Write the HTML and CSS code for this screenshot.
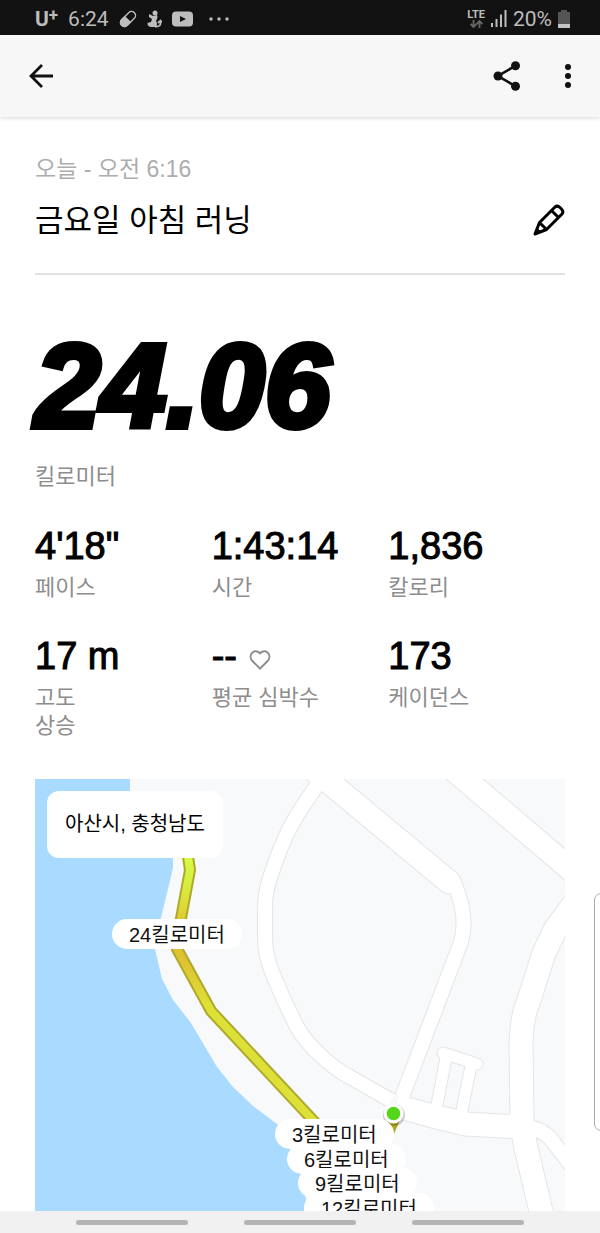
FILE: index.html
```html
<!DOCTYPE html>
<html lang="ko">
<head>
    <meta charset="UTF-8">
    <meta name="viewport" content="width=device-width, initial-scale=1">
    <title>금요일 아침 러닝</title>
    <link rel="stylesheet" href="styles.css">
</head>
<body>
    <div class="status-bar">
        <div class="status-left">
            <span class="carrier">U<sup>+</sup></span>
            <span>6:24</span>
            <svg class="pill-icon" width="18" height="18" viewBox="0 0 18 18">
                <g transform="rotate(-45 9 9)">
                    <rect x="0" y="5" width="18" height="8" rx="4" fill="none" stroke="#bdbdbd" stroke-width="1.4"/>
                    <path d="M9 4.3H4a4.7 4.7 0 0 0 0 9.4h5z" fill="#bdbdbd"/>
                </g>
            </svg>
            <svg width="15" height="18" viewBox="0 0 15 18" fill="#bdbdbd">
                <circle cx="8" cy="3" r="2.5"/>
                <path d="M2 4l4 2 4-1q1 2 0 4l-1 2q2 3 0 6H4q-4-1-3.500-4l3.500-1 1-3L2 7z"/>
                <path d="M8 16.500c4 .5 6-1 5.500-5M11 13l2.500-2.500 1.500 2" fill="none" stroke="#bdbdbd" stroke-width="1.800"/>
            </svg>
            <svg width="21" height="16" viewBox="0 0 21 16">
                <rect width="21" height="15" y=".5" rx="4" fill="#bdbdbd"/>
                <path d="M8 5l6 3-6 3z" fill="#121212"/>
            </svg>
            <svg class="more-icon" width="20" height="4" viewBox="0 0 20 4" fill="#bdbdbd">
                <circle cx="2" cy="2" r="1.700"/>
                <circle cx="10" cy="2" r="1.700"/>
                <circle cx="18" cy="2" r="1.700"/>
            </svg>
        </div>
        <div class="status-right">
            <div class="network">
                <span>LTE</span>
                <svg width="13" height="8" viewBox="0 0 13 8" fill="none" stroke="#666" stroke-width="1.800">
                    <path d="M3.500 0v7M.6 4l2.900 3 2.900-3M9.500 8V1M6.600 4l2.900-3 2.900 3"/>
                </svg>
            </div>
            <svg width="16" height="17" viewBox="0 0 16 17" fill="#bdbdbd">
                <path d="M0 13h2v4H0zM4.500 9h2v8h-2zM9 4.500h2V17H9zM13.500 0h2v17h-2z"/>
            </svg>
            <span>20%</span>
            <svg width="12" height="18" viewBox="0 0 12 18">
                <path d="M3 2V0h6v2h3v16H0V2z" fill="#555"/>
                <path d="M0 14h12v4H0z" fill="#c4c4c4"/>
            </svg>
        </div>
    </div>

    <header class="app-bar">
        <button class="icon-button" aria-label="뒤로">
            <svg width="24" height="24" viewBox="0 0 24 24" fill="none" stroke="#111" stroke-width="2.800">
                <path d="M24 12H2M13 1L2 12l11 11"/>
            </svg>
        </button>
        <div class="app-actions">
            <button class="icon-button" aria-label="공유">
                <svg width="28" height="30" viewBox="0 0 28 30">
                    <path d="M22 5L5 15l17 10" fill="none" stroke="#111" stroke-width="2.600"/>
                    <circle cx="22.500" cy="4.800" r="4.500" fill="#111"/>
                    <circle cx="5" cy="15" r="4.500" fill="#111"/>
                    <circle cx="22.500" cy="25.200" r="4.500" fill="#111"/>
                </svg>
            </button>
            <button class="icon-button" aria-label="더보기">
                <svg width="8" height="24" viewBox="0 0 8 24" fill="#111">
                    <circle cx="4" cy="3" r="3"/>
                    <circle cx="4" cy="12" r="3"/>
                    <circle cx="4" cy="21" r="3"/>
                </svg>
            </button>
        </div>
    </header>

    <main class="content">
        <div class="date">오늘 - 오전 6:16</div>
        <div class="title-row">
            <h1>금요일 아침 러닝</h1>
            <button class="icon-button" aria-label="제목 수정">
                <svg width="32" height="32" viewBox="0 0 32 32" fill="none" stroke="#000" stroke-width="3" stroke-linejoin="round">
                    <path d="M2 30l4.500-11.500L22 3q2.500-2 5 .5l1.500 1.500q2.500 2.500.500 5L13.500 25.500zM18.500 6.500l7 7M6.500 18.500l7 7"/>
                    <path d="M2 30l2-6 4 4z" fill="#000" stroke-width="1"/>
                </svg>
            </button>
        </div>

        <div class="distance">24.06</div>
        <div class="label">킬로미터</div>

        <div class="stats">
            <div class="stat">
                <div class="value">4'18"</div>
                <div class="label">페이스</div>
            </div>
            <div class="stat">
                <div class="value">1:43:14</div>
                <div class="label">시간</div>
            </div>
            <div class="stat">
                <div class="value">1,836</div>
                <div class="label">칼로리</div>
            </div>
            <div class="stat">
                <div class="value">17 m</div>
                <div class="label">고도<br>상승</div>
            </div>
            <div class="stat">
                <div class="value">--
                    <svg class="heart" width="22" height="20" viewBox="0 0 22 20" fill="none" stroke="#8d8d8d" stroke-width="2">
                        <path d="M11 18.600L3.200 10.800C-1.500 5.500 5-2.500 11 3.300 17-2.500 23.500 5.500 18.800 10.800z"/>
                    </svg>
                </div>
                <div class="label">평균 심박수</div>
            </div>
            <div class="stat">
                <div class="value">173</div>
                <div class="label">케이던스</div>
            </div>
        </div>

        <div class="map">
            <svg class="map-canvas" viewBox="35 779 530 432" preserveAspectRatio="xMinYMin slice">
                <defs>
                    <linearGradient id="pace" gradientUnits="userSpaceOnUse" x1="0" y1="860" x2="0" y2="1020">
                        <stop offset="0" stop-color="#d3fb45"/>
                        <stop offset=".22" stop-color="#dae63b"/>
                        <stop offset=".45" stop-color="#dfba30"/>
                        <stop offset=".65" stop-color="#dfc431"/>
                        <stop offset=".9" stop-color="#dde037"/>
                    </linearGradient>
                    <g id="roads" fill="none" stroke-linejoin="round">
                        <path class="road-m" d="M326 772L309 797Q293 820 285 838T270 878Q265 893 265 908V937Q265 955 272 972T284 1000L297 1027Q305 1041 320 1055T348 1076L392 1101"/>
                        <path class="road-l" d="M396 1106L433 1116 466 1124 520 1127"/>
                        <path class="road-m" d="M528 1127Q545 1130 554 1143L574 1169"/>
                        <path class="road-l" d="M577 900L555 930 544 953 529 1000Q522 1015 521 1043L522 1118Q523 1135 526 1148L546 1232"/>
                        <path class="road-l" stroke-linecap="round" d="M312 768L449 882"/>
                        <path class="road-l" d="M440 758L582 879"/>
                        <path class="road-m" d="M454 882L459 896Q467 922 461 942L439 1000 402 1097"/>
                        <path class="road-s" stroke-linecap="round" d="M443 1053L477 1064"/>
                        <path class="road-s" d="M446 1058L436 1110M471 1066L461 1115"/>
                    </g>
                </defs>
                <path fill="#a9daff" d="M35 779h95v40l43 39v10l-12 50-6 31 7 30 11 21 18 23 26 44 16 20 20 19 24 18 23 31 8 60v48H35z"/>
                <use href="#roads" class="road-edge"/>
                <use href="#roads" class="road-fill"/>
                <path class="route-edge" d="M187 850L190 870 177 940 177 949 211 1011 324 1132"/>
                <path class="route" d="M187 850L190 870 177 940 177 949 211 1011 324 1132"/>
                <path fill="#b3a91d" d="M387 1120h13l-6 14z"/>
                <circle cx="394" cy="1115" r="11" fill="#000" opacity=".2"/>
                <circle cx="393.500" cy="1113.500" r="10" fill="#fff"/>
                <circle cx="393.500" cy="1113.500" r="6.800" fill="#55d61b"/>
            </svg>
            <div class="place">아산시, 충청남도</div>
            <span class="marker km24">24킬로미터</span>
            <span class="marker km3">3킬로미터</span>
            <span class="marker km6">6킬로미터</span>
            <span class="marker km9">9킬로미터</span>
            <span class="marker km12">12킬로미터</span>
        </div>
    </main>

    <nav class="nav-bar">
        <button aria-label="최근 앱"></button>
        <button aria-label="홈"></button>
        <button aria-label="뒤로 가기"></button>
    </nav>
    <div class="edge-handle"></div>
</body>
</html>
```

FILE: styles.css
```css
* {
    box-sizing: border-box;
}
body {
    margin: 0;
    height: 100vh;
    display: flex;
    flex-direction: column;
    overflow: hidden;
    background-color: #fff;
    color: #000;
    font-family: "Liberation Sans", "Noto Sans CJK KR", sans-serif;
}
svg {
    display: block;
    flex: none;
}
button {
    border: none;
    padding: 0;
    background: none;
    cursor: pointer;
}

/* status bar */
.status-bar {
    flex: none;
    height: 35px;
    padding: 2px 30px 0 35px;
    display: flex;
    justify-content: space-between;
    align-items: center;
    background-color: #121212;
    color: #bdbdbd;
    font-family: Roboto, "Liberation Sans", sans-serif;
    font-size: 21px;
}
.status-left {
    display: flex;
    align-items: center;
    gap: 10px;
}
.carrier {
    font-weight: 700;
    line-height: 20px;
}
.carrier sup {
    font-size: 17px;
    line-height: 0;
    vertical-align: 5px;
}
.more-icon {
    margin-left: 6px;
}
.status-right {
    display: flex;
    align-items: center;
    gap: 6px;
}
.network {
    display: flex;
    flex-direction: column;
    align-items: center;
    font-size: 11px;
    font-weight: 700;
    line-height: 10px;
}

/* top bar */
.app-bar {
    flex: none;
    height: 82px;
    padding: 0 28px 0 29px;
    display: flex;
    justify-content: space-between;
    align-items: center;
    background-color: #f7f7f7;
    box-shadow: 0 1px 4px rgba(0, 0, 0, 0.15);
}
.app-actions {
    display: flex;
    align-items: center;
    gap: 43px;
}

.content {
    flex: 1;
    min-height: 0;
    display: flex;
    flex-direction: column;
    padding: 36px 35px 0;
}
.date {
    color: #adadad;
    font-size: 23px;
    line-height: 32px;
}
.title-row {
    display: flex;
    justify-content: space-between;
    align-items: center;
    margin-top: 11px;
    padding-bottom: 29px;
    border-bottom: 2px solid #e2e2e2;
}
h1 {
    margin: 0;
    padding-top: 2px;
    font-size: 31px;
    font-weight: 400;
    line-height: 46px;
}
.distance {
    margin: 51px 0 17px;
    font-size: 118px;
    font-style: italic;
    font-weight: 700;
    line-height: 120px;
    -webkit-text-stroke: 6px #000;
}
.label {
    color: #8d8d8d;
    font-size: 22px;
    line-height: 28px;
}
.stats {
    display: grid;
    grid-template-columns: repeat(3, 1fr);
    row-gap: 32px;
    margin-top: 33px;
}
.value {
    display: flex;
    align-items: center;
    gap: 12px;
    margin-bottom: 6px;
    font-size: 38px;
    line-height: 44px;
    -webkit-text-stroke: 1px #000;
}
.heart {
    margin-top: 8px;
}

/* map */
.map {
    position: relative;
    flex: 1;
    min-height: 0;
    margin-top: 39px;
    overflow: hidden;
    background-color: #f7f9fb;
}
.map-canvas {
    width: 100%;
    height: 100%;
}
.road-edge {
    stroke: #e4e5e6;
    --casing: 2px;
}
.road-fill {
    stroke: #fff;
    --casing: 0px;
}
.road-s {
    stroke-width: calc(11px + var(--casing));
}
.road-m {
    stroke-width: calc(14px + var(--casing));
}
.road-l {
    stroke-width: calc(23px + var(--casing));
}
.route-edge {
    fill: none;
    stroke: #b0a82b;
    stroke-width: 12px;
}
.route {
    fill: none;
    stroke: url(#pace);
    stroke-width: 8px;
}
.place {
    position: absolute;
    left: 12px;
    top: 12px;
    padding: 0 18px;
    border-radius: 12px;
    background-color: #fff;
    font-size: 20px;
    line-height: 67px;
}
.marker {
    position: absolute;
    padding: 2px 17px 0;
    border-radius: 15px;
    background-color: #fff;
    color: #111;
    font-size: 20px;
    line-height: 28px;
    white-space: nowrap;
}
.km24 {
    left: 77px;
    top: 140px;
}
.km3 {
    left: 240px;
    top: 340px;
}
.km6 {
    left: 252px;
    top: 365px;
}
.km9 {
    left: 263px;
    top: 389px;
}
.km12 {
    left: 269px;
    top: 414px;
}

/* bottom navigation */
.nav-bar {
    flex: none;
    height: 22px;
    display: flex;
    justify-content: center;
    align-items: center;
    gap: 56px;
    background-color: #f1f1f1;
}
.nav-bar button {
    width: 112px;
    height: 5px;
    border-radius: 3px;
    background-color: #b4b4b4;
}
.edge-handle {
    position: fixed;
    right: -8px;
    bottom: 102px;
    width: 14px;
    height: 238px;
    border: 1px solid #aaa;
    border-radius: 8px;
    background-color: #fff;
}
```
